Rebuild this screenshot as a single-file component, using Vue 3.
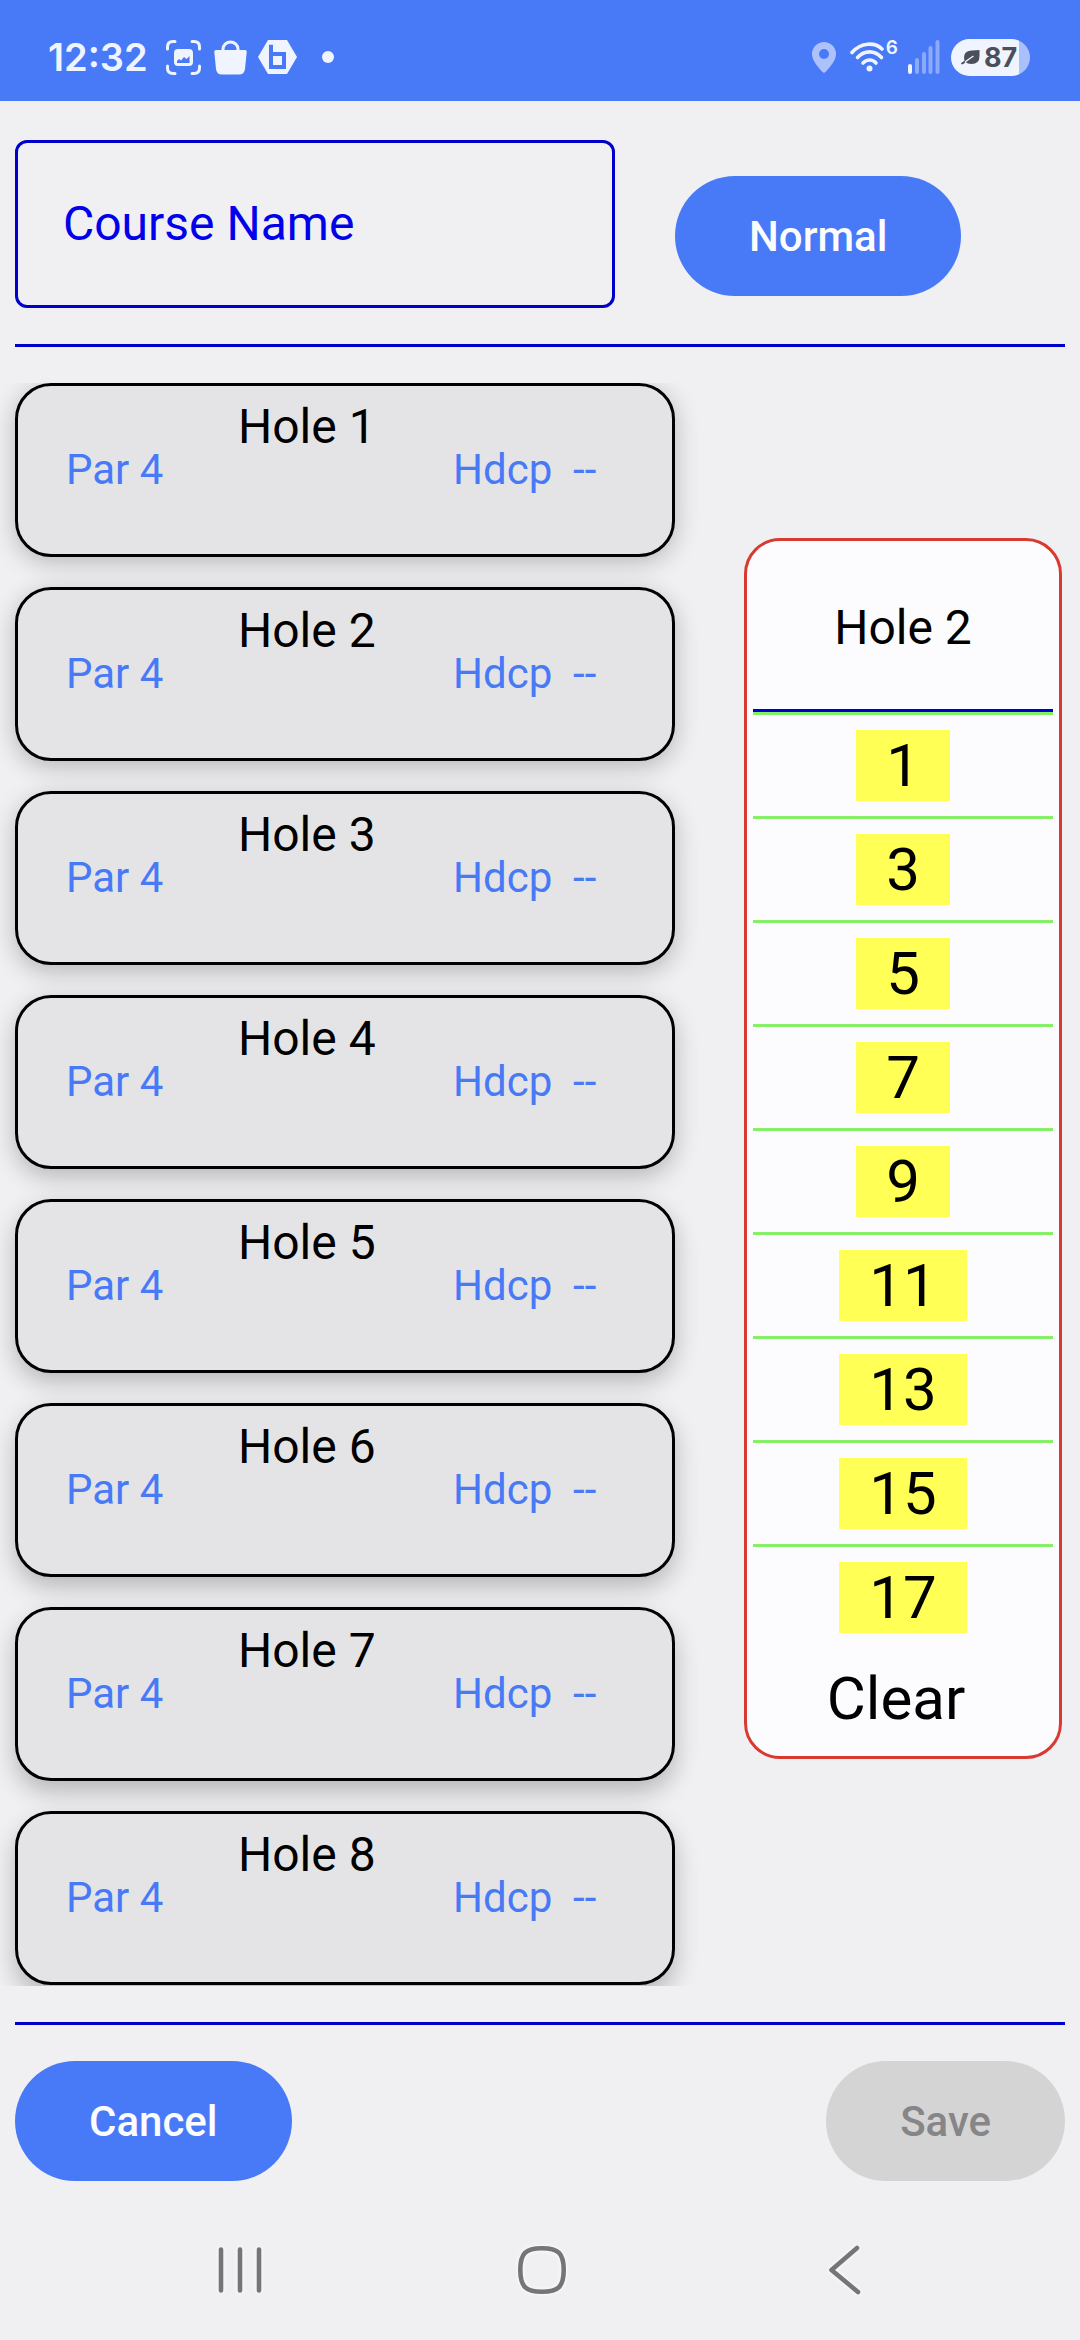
<script setup>
import { ref } from 'vue'

const courseName = ref('')
const holes = Array.from({ length: 8 }, (_, i) => ({ number: i + 1, par: 4, handicap: '--' }))
const handicaps = [1, 3, 5, 7, 9, 11, 13, 15, 17]
</script>

<template>
  <div class="screen">
    <header class="status">
      <div class="status-side">
        <span class="clock">12:32</span>
        <svg class="capture" width="35" height="35" viewBox="0 0 35 35" aria-hidden="true">
          <path d="M1.5 9V7Q1.5 1.500 7 1.500H9M26 1.500h2Q33.500 1.500 33.500 7v2M33.500 26v2Q33.500 33.500 28 33.500h-2M9 33.500H7Q1.500 33.500 1.500 28v-2" fill="none" stroke="currentColor" stroke-width="3" stroke-linecap="round" />
          <path fill-rule="evenodd" d="M12 9h11q4 0 4 4v9q0 4-4 4H12q-4 0-4-4v-9q0-4 4-4ZM11 23h12.500v-7l-3 3-2.500-2-3 3.500-2-1.500-2 2Z" fill="currentColor" />
        </svg>
        <svg class="bag" width="33" height="35" viewBox="0 0 33 35" aria-hidden="true">
          <path d="M9 11V9a7.500 7 0 0 1 15 0v2" fill="none" stroke="currentColor" stroke-width="3" />
          <path d="M2 10h29q2 0 1.700 2L31 29q-.6 5.500-6 5.500H8Q2.600 34.500 2 29L.3 12Q0 10 2 10Z" fill="currentColor" />
        </svg>
        <svg class="hex" width="39" height="34" viewBox="0 0 39 34" aria-hidden="true">
          <path d="M10 0h19l10 17-10 17H10L0 17Z" fill="currentColor" />
          <path d="M13 4.700V27h13V14H13" fill="none" stroke="#4879f7" stroke-width="4" />
        </svg>
        <span class="dot"></span>
      </div>
      <div class="status-side">
        <svg width="24" height="31" viewBox="0 0 24 31" class="pin" aria-hidden="true">
          <path fill-rule="evenodd" d="M12 0a12 12 0 0 1 12 12c0 6-5 12-10.500 18q-1.500 1.400-3 0C5 24 0 18 0 12A12 12 0 0 1 12 0Zm0 7a5 5 0 1 0 0 10 5 5 0 0 0 0-10Z" fill="currentColor" />
        </svg>
        <svg width="36" height="30" viewBox="0 0 36 30" class="wifi" aria-hidden="true">
          <g fill="none" stroke="currentColor" stroke-width="3.600" stroke-linecap="round">
            <path d="M2 10.500C11 0 25 0 32 7" />
            <path d="M7.500 15.500c7-7.500 17-7.500 24 0" />
            <path d="M13 21c4-4 9.500-4 13 0" />
          </g>
          <circle cx="19.500" cy="26.500" r="3" fill="currentColor" />
        </svg>
        <span class="wifi-gen">6</span>
        <svg width="32" height="34" viewBox="0 0 32 34" class="signal" aria-hidden="true">
          <g stroke="currentColor" stroke-width="4" stroke-linecap="round">
            <path d="M2 26v6" />
            <path d="M9 20v12M16 14v18M22.500 8v24M29.500 2v30" opacity=".4" />
          </g>
        </svg>
        <div class="battery">
          <svg width="19" height="15" viewBox="0 0 19 15" aria-hidden="true">
            <path d="M18.500 0v6q0 8-8 8-4 0-6-2Q3 14 .5 14.500L0 13q2-1 3.500-2.500C2 4 5 .5 11 .5Z" fill="currentColor" />
            <path d="M4 12Q8 9 12.500 6" stroke="#f0f4ff" stroke-width="1.400" fill="none" />
          </svg>
          <span>87</span>
        </div>
      </div>
    </header>

    <main class="app">
      <form class="course" @submit.prevent>
        <input v-model="courseName" class="course-name" type="text" placeholder="Course Name" aria-label="Course Name">
        <button class="pill mode" type="button">Normal</button>
      </form>

      <div class="content">
        <ul class="holes">
          <li v-for="hole in holes" :key="hole.number" class="hole" :style="{ '--drop': hole.number + 4 + 'px' }">
            <button class="stat" type="button">Par {{ hole.par }}</button>
            <span class="hole-name">Hole {{ hole.number }}</span>
            <button class="stat" type="button">Hdcp&nbsp; {{ hole.handicap }}</button>
          </li>
        </ul>

        <section class="picker" aria-labelledby="picker-title">
          <h2 id="picker-title">Hole 2</h2>
          <ul class="options">
            <li v-for="value in handicaps" :key="value">
              <button type="button" class="option">{{ value }}</button>
            </li>
          </ul>
          <button type="button" class="clear">Clear</button>
        </section>
      </div>

      <div class="actions">
        <button class="pill" type="button">Cancel</button>
        <button class="pill" type="button" disabled>Save</button>
      </div>
    </main>

    <nav class="system-nav" aria-label="System">
      <button type="button" aria-label="Recent apps">
        <svg width="48" height="54" viewBox="0 0 48 54">
          <path d="M5 6.500v41M24 6.500v41M43 6.500v41" />
        </svg>
      </button>
      <button type="button" aria-label="Home">
        <svg width="54" height="54" viewBox="0 0 54 54">
          <path d="M27 5.300c16.500 0 21.700 5.200 21.700 21.700S43.500 48.700 27 48.700 5.300 43.500 5.300 27 10.500 5.300 27 5.300Z" />
        </svg>
      </button>
      <button type="button" aria-label="Back">
        <svg width="36" height="54" viewBox="0 0 36 54">
          <path d="M31 5 5.500 27 32 49" />
        </svg>
      </button>
    </nav>
  </div>
</template>

<style>
body {
  background: #f0f0f3;
}
</style>

<style scoped>
.screen {
  display: flex;
  flex-direction: column;
  min-height: 100vh;
  background: #f0f0f3;
  color: #000;
  font-family: Roboto, sans-serif;
}

button {
  border: 0;
  padding: 0;
  background: none;
  font: inherit;
  cursor: pointer;
}

ul {
  margin: 0;
  padding: 0;
  list-style: none;
}

.status {
  display: flex;
  justify-content: space-between;
  box-sizing: border-box;
  height: 101px;
  padding: 13px 50px 0 48px;
  background: #4879f7;
  color: #f0f4ff;
  font-family: Inter, sans-serif;
}

.status-side {
  display: flex;
  align-items: center;
}

.clock {
  font-size: 38px;
  font-weight: 600;
  line-height: 48px;
}

.capture {
  margin-left: 18px;
}

.bag {
  margin-left: 13px;
}

.hex {
  margin-left: 11px;
}

.dot {
  width: 12px;
  height: 12px;
  margin-left: 25px;
  border-radius: 50%;
  background: currentColor;
}

.pin {
  opacity: 0.6;
}

.wifi {
  margin-left: 14px;
}

.wifi-gen {
  align-self: flex-start;
  padding-top: 24px;
  font-size: 19px;
  font-weight: 600;
  line-height: 22px;
}

.signal {
  margin-left: 10px;
}

.battery {
  display: flex;
  align-items: center;
  gap: 4px;
  box-sizing: border-box;
  width: 79px;
  height: 37px;
  margin-left: 11px;
  padding-left: 10px;
  border-radius: 19px;
  background: linear-gradient(to right, #f0f4ff 68px, #a9c0fb 68px);
  color: #4a4f5c;
  font-size: 27px;
  font-weight: 700;
}

.app {
  padding-top: 39px;
}

.course {
  display: grid;
  grid-template-columns: 4fr 3fr;
  align-items: center;
  margin: 0 15px;
  padding-bottom: 36px;
  border-bottom: 3px solid #0000cd;
}

.course-name {
  box-sizing: border-box;
  width: 100%;
  height: 168px;
  padding: 0 45px 2px;
  border: 3px solid #0000cd;
  border-radius: 12px;
  background: none;
  color: #0000eb;
  font: 400 48px Roboto, sans-serif;
}

.course-name::placeholder {
  color: #0000eb;
  opacity: 1;
}

.pill {
  height: 120px;
  padding: 0 74px;
  border-radius: 60px;
  background: #4879f7;
  color: #fcfcff;
  font-size: 42px;
  font-weight: 500;
}

.pill:disabled {
  background: #d4d4d4;
  color: #868688;
}

.mode {
  justify-self: start;
  margin: 24px 0 0 60px;
}

.content {
  display: grid;
  grid-template-columns: 2fr 1fr;
  align-items: start;
  padding: 36px 0;
}

.holes {
  display: grid;
  gap: 30px;
  padding: 0 45px 1px 15px;
  overflow: hidden;
}

.hole {
  display: grid;
  grid-template-columns: 4fr 5fr 5fr;
  align-items: start;
  justify-items: start;
  box-sizing: border-box;
  height: 174px;
  padding: 13px 4px 0 48px;
  border: 3px solid #000;
  border-radius: 36px;
  background: #e4e4e6;
  box-shadow: 0 var(--drop) 24px rgba(0, 0, 0, 0.24);
}

.hole-name {
  font-size: 48px;
  line-height: 56px;
}

.stat {
  margin-top: 46px;
  color: #4879f7;
  font-size: 42px;
  line-height: 50px;
}

.picker {
  margin: 155px 18px 0 24px;
  padding: 0 6px 6px;
  border: 3px solid #d93a2f;
  border-radius: 36px;
  background: #fcfcff;
  text-align: center;
}

.picker h2 {
  margin: 0;
  padding-top: 6px;
  border-bottom: 3px solid #0000cd;
  font-size: 48px;
  font-weight: 400;
  line-height: 162px;
}

.options li {
  padding: 15px 0;
  border-top: 3px solid #86ef68;
}

.option {
  display: block;
  margin: 0 auto;
  padding: 0 30px;
  background: #ffff55;
  font-size: 60px;
  line-height: 71px;
}

.clear {
  display: block;
  width: 100%;
  padding: 15px 14px 15px 0;
  font-size: 60px;
  line-height: 72px;
}

.actions {
  display: flex;
  justify-content: space-between;
  margin: 0 15px;
  padding-top: 36px;
  border-top: 3px solid #0000cd;
}

.system-nav {
  display: grid;
  grid-template-columns: repeat(3, 1fr);
  justify-items: center;
  margin-top: 62px;
  padding: 0 85px 43px 89px;
}

.system-nav svg {
  display: block;
  fill: none;
  stroke: #757575;
  stroke-width: 4.600;
  stroke-linecap: round;
  stroke-linejoin: round;
  filter: drop-shadow(0 0 2px #fff);
}
</style>
